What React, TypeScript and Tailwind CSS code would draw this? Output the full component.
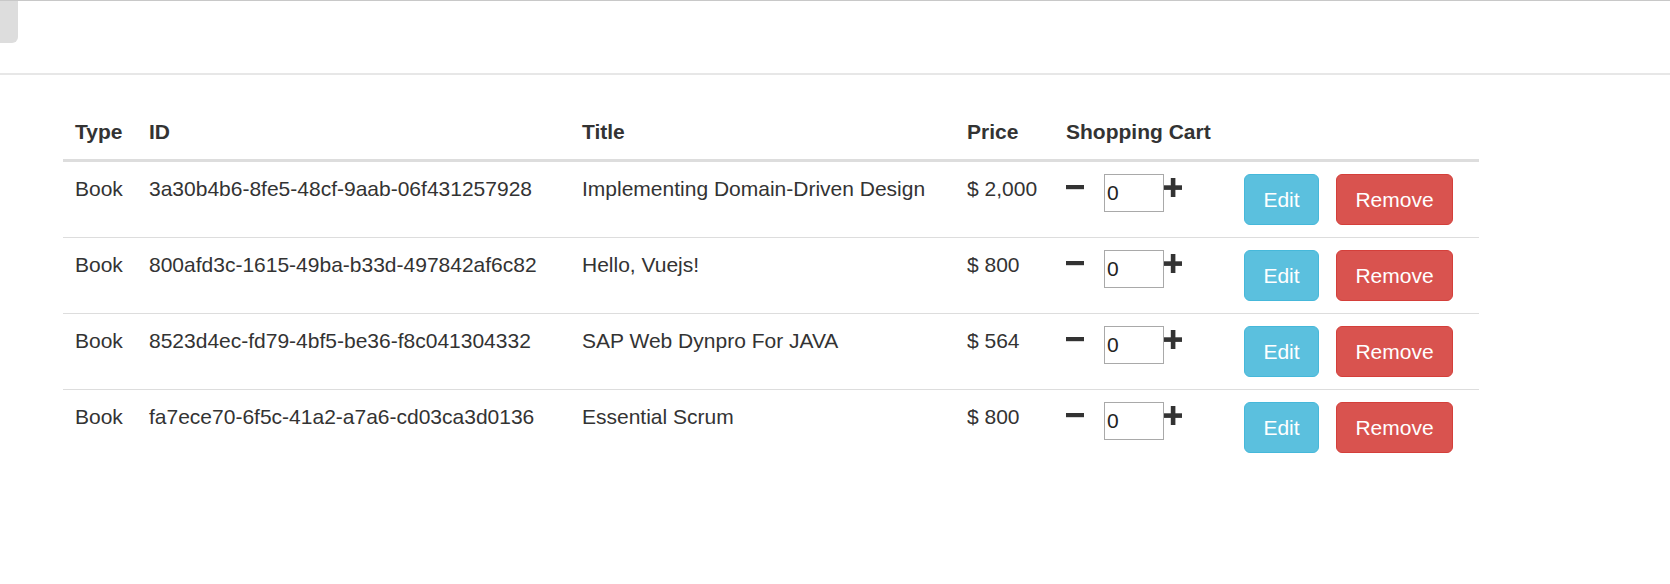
import React from "react";

const rows = [
  { id: "3a30b4b6-8fe5-48cf-9aab-06f431257928", title: "Implementing Domain-Driven Design", price: "$ 2,000" },
  { id: "800afd3c-1615-49ba-b33d-497842af6c82", title: "Hello, Vuejs!", price: "$ 800" },
  { id: "8523d4ec-fd79-4bf5-be36-f8c041304332", title: "SAP Web Dynpro For JAVA", price: "$ 564" },
  { id: "fa7ece70-6f5c-41a2-a7a6-cd03ca3d0136", title: "Essential Scrum", price: "$ 800" },
];

function Minus() {
  return (
    <svg width="18" height="19" viewBox="0 0 18 19" className="block shrink-0">
      <rect x="0" y="7" width="18" height="4.2" fill="#333" />
    </svg>
  );
}

function Plus() {
  return (
    <svg width="18" height="19" viewBox="0 0 18 19" className="block shrink-0">
      <rect x="6.8" y="0" width="4.6" height="19" fill="#333" />
      <rect x="0" y="7.3" width="18" height="4.6" fill="#333" />
    </svg>
  );
}

export default function App() {
  return (
    <div className="w-[1670px] h-[584px] bg-white text-[#333] font-['Liberation_Sans',Arial,sans-serif] text-[21px] leading-[30px]">
      <div className="h-[75px] border-t border-t-[#c8c8c8] border-b-2 border-b-[#e7e7e7]">
        <div className="w-[18px] h-[42px] bg-[#dddddd] rounded-br-[6px]" />
      </div>
      <table className="ml-[63px] mt-[30px] w-[1416px] table-fixed border-collapse">
        <colgroup>
          <col className="w-[74px]" />
          <col className="w-[433px]" />
          <col className="w-[385px]" />
          <col className="w-[99px]" />
          <col className="w-[178px]" />
          <col className="w-[247px]" />
        </colgroup>
        <thead>
          <tr>
            <th className="p-[12px] text-left font-bold align-bottom border-b-[3px] border-b-[#dddddd]">Type</th>
            <th className="p-[12px] text-left font-bold align-bottom border-b-[3px] border-b-[#dddddd]">ID</th>
            <th className="p-[12px] text-left font-bold align-bottom border-b-[3px] border-b-[#dddddd]">Title</th>
            <th className="p-[12px] text-left font-bold align-bottom border-b-[3px] border-b-[#dddddd]">Price</th>
            <th className="p-[12px] text-left font-bold align-bottom border-b-[3px] border-b-[#dddddd] whitespace-nowrap">Shopping Cart</th>
            <th className="p-[12px] text-left font-bold align-bottom border-b-[3px] border-b-[#dddddd]"></th>
          </tr>
        </thead>
        <tbody>
          {rows.map((r) => (
            <tr key={r.id}>
              <td className="p-[12px] align-top border-t border-t-[#dddddd]">Book</td>
              <td className="p-[12px] align-top border-t border-t-[#dddddd] whitespace-nowrap">{r.id}</td>
              <td className="p-[12px] align-top border-t border-t-[#dddddd] whitespace-nowrap">{r.title}</td>
              <td className="p-[12px] align-top border-t border-t-[#dddddd] whitespace-nowrap">{r.price}</td>
              <td className="p-[12px] align-top border-t border-t-[#dddddd]">
                <div className="flex items-start">
                  <div className="mt-[4px]">
                    <Minus />
                  </div>
                  <input
                    type="text"
                    defaultValue="0"
                    className="ml-[20px] w-[60px] h-[38px] border border-[#a9a9a9] px-[2px] text-[21px] leading-[30px] text-[#222] bg-white outline-none font-['Liberation_Sans',Arial,sans-serif]"
                  />
                  <div className="mt-[4px]">
                    <Plus />
                  </div>
                </div>
              </td>
              <td className="p-[12px] align-top border-t border-t-[#dddddd]">
                <div className="flex gap-[17px]">
                  <button className="w-[75px] h-[51px] rounded-[6px] bg-[#5bc0de] border-[1.5px] border-[#46b8da] text-white text-[21px] leading-[30px]">
                    Edit
                  </button>
                  <button className="w-[117px] h-[51px] rounded-[6px] bg-[#d9534f] border-[1.5px] border-[#d43f3a] text-white text-[21px] leading-[30px]">
                    Remove
                  </button>
                </div>
              </td>
            </tr>
          ))}
        </tbody>
      </table>
    </div>
  );
}
